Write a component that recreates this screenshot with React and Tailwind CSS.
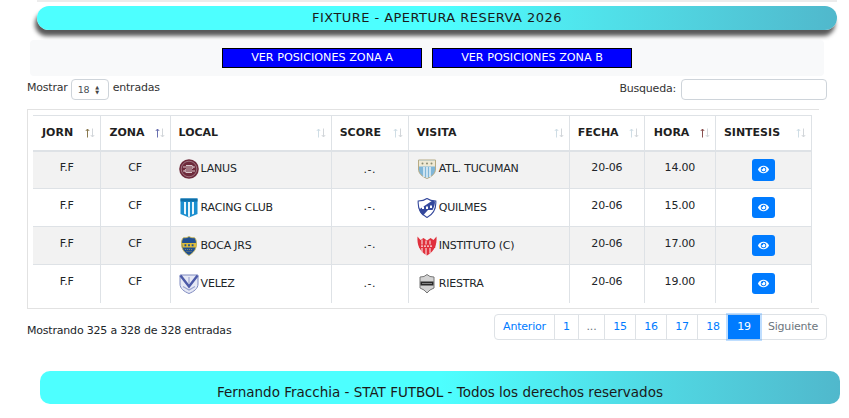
import { FaEye } from 'react-icons/fa';

const FONT = "[font-family:'DejaVu_Sans',Verdana,sans-serif]";

const Lanus = () => (
  <svg width="20" height="20" viewBox="0 0 20 20">
    <circle cx="10" cy="10" r="9.800" fill="#6e2b3c" />
    <circle cx="10" cy="10" r="7.800" fill="none" stroke="#a98590" strokeWidth="0.800" />
    <path d="M4 8h12M4 12h12M7 6.500h6a2 2 0 0 1 0 3.500H7a2 2 0 0 0 0 3.500h6" fill="none" stroke="#d8c6ca" strokeWidth="1" />
  </svg>
);

const Racing = () => (
  <svg width="20" height="20" viewBox="0 0 20 20">
    <path d="M1.500 0.500h17v15.500l-8.500 3.500-8.500-3.500z" fill="#1b8fd0" />
    <path d="M1.500 0.500h17v3h-17z" fill="#0f6ea8" />
    <path d="M5 4h2v12.500l-2-.8zM9 4h2v14.500l-1 .4-1-.4zM13 4h2v11.700l-2 .8z" fill="#e9f6fc" />
  </svg>
);

const Boca = () => (
  <svg width="20" height="20" viewBox="0 0 20 20">
    <path d="M10 0.500c1.500 1 3 1.400 5.500 1.200 1.300 1 2 3 2 6.300 0 5-3 9-7.500 11.500C5.500 17 2.500 13 2.500 8c0-3.300.7-5.300 2-6.300 2.500.2 4-.2 5.500-1.200z" fill="#1f4f92" stroke="#c8b552" strokeWidth="0.900" />
    <path d="M3 7h14v4.500H3.600z" fill="#dcbc3a" />
    <path d="M5.500 8.200h1.800v2H5.500zM9.100 8.200h1.800v2H9.100zM12.700 8.200h1.800v2h-1.800z" fill="#1f4f92" />
    <path d="M6 13.500h8M7.500 15.500h5" stroke="#b9a548" strokeWidth="0.700" strokeDasharray="1 1" />
  </svg>
);

const Velez = () => (
  <svg width="20" height="20" viewBox="0 0 20 20">
    <path d="M1 1h18v9c0 4.500-4 7.500-9 9.500-5-2-9-5-9-9.500z" fill="#e6e9f5" stroke="#7f8ac0" strokeWidth="1" />
    <path d="M1.500 1.500L10 12.500 18.500 1.500" fill="none" stroke="#4c5aa8" strokeWidth="2.400" />
    <path d="M4 12.500l6 3.500 6-3.500M10 3v7" fill="none" stroke="#9aa3d0" strokeWidth="1.100" />
  </svg>
);

const Tucuman = () => (
  <svg width="20" height="20" viewBox="0 0 20 20">
    <path d="M1.500 1h17v9c0 4.500-3.500 7.500-8.500 9.500-5-2-8.500-5-8.500-9.500z" fill="#7fb6d8" stroke="#b7ab84" strokeWidth="1" />
    <path d="M2 1.500h16v6H2z" fill="#efe9d4" />
    <path d="M7 8v10M10 8v11M13 8v10" stroke="#edf6fb" strokeWidth="1.400" />
    <circle cx="5.500" cy="4.500" r="1" fill="#8a8c72" />
    <circle cx="10" cy="4.500" r="1" fill="#8a8c72" />
    <circle cx="14.500" cy="4.500" r="1" fill="#8a8c72" />
  </svg>
);

const Quilmes = () => (
  <svg width="20" height="20" viewBox="0 0 20 20">
    <path d="M10 0.500c2 1.500 5 2.500 8.800 2.500 .5 7-2.300 13-8.800 16.500C3.500 16 .7 10 1.200 3 5 3 8 2 10 .5z" fill="#fff" stroke="#34489c" strokeWidth="1.100" />
    <path d="M2 11.500L15.500 2.500 18 3.500c0 3-1 6-2.500 8.500H11l-5 5.500C4 16 3 14 2 11.500z" fill="#34489c" />
    <path d="M5 8.500h2v2.500H5zM9 8.500h2v2.500H9zM13 7.500h2v2.500h-2z" fill="#fff" />
  </svg>
);

const Instituto = () => (
  <svg width="20" height="20" viewBox="0 0 20 20">
    <path d="M0.500 0.500l3 3.500 3-2 3.500 2.500 3.500-2.500 3 2 3-3.500c.5 8-1.500 14.500-9.500 19C2 15 0 8.500.5.500z" fill="#e0303c" />
    <path d="M5 3.500v13M9 4.500v14.500M13 4.500v13" stroke="#f7d5d8" strokeWidth="1.200" />
    <path d="M1.800 8.500h16.400v3.500H2.500z" fill="#e0303c" />
    <path d="M4 10.200h12" stroke="#fbe4e6" strokeWidth="1.300" strokeDasharray="2 1" />
  </svg>
);

const Riestra = () => (
  <svg width="20" height="20" viewBox="0 0 20 20">
    <path d="M10 0.500l3 2 4 .5v11l-4 2-3 3-3-3-4-2V3l4-.5z" fill="#d3d3d3" stroke="#777" strokeWidth="1" />
    <path d="M3.500 7.500h13v4h-13z" fill="#2b2b2b" />
    <path d="M5.500 9.500h9" stroke="#ddd" strokeWidth="1" strokeDasharray="1 1" />
  </svg>
);

const rows = [
  { local: 'LANUS', localLogo: <Lanus />, visita: 'ATL. TUCUMAN', visitaLogo: <Tucuman />, hora: '14.00' },
  { local: 'RACING CLUB', localLogo: <Racing />, visita: 'QUILMES', visitaLogo: <Quilmes />, hora: '15.00' },
  { local: 'BOCA JRS', localLogo: <Boca />, visita: 'INSTITUTO (C)', visitaLogo: <Instituto />, hora: '17.00' },
  { local: 'VELEZ', localLogo: <Velez />, visita: 'RIESTRA', visitaLogo: <Riestra />, hora: '19.00' },
];

const columns = [
  { label: 'JORN', width: 'w-[67px]', up: '#8a7a50', shift: true },
  { label: 'ZONA', width: 'w-[70px]', up: '#6a70b0', shift: true },
  { label: 'LOCAL', width: 'w-[161px]' },
  { label: 'SCORE', width: 'w-[77px]' },
  { label: 'VISITA', width: 'w-[161px]' },
  { label: 'FECHA', width: 'w-[75px]' },
  { label: 'HORA', width: 'w-[71px]', up: '#8a5050', shift: true },
  { label: 'SINTESIS', width: 'w-[96px]' },
];

const pages = [
  { label: 'Anterior', width: 'w-[59px]' },
  { label: '1', width: 'w-[24px]' },
  { label: '...', width: 'w-[26px]', muted: true },
  { label: '15', width: 'w-[31px]' },
  { label: '16', width: 'w-[31px]' },
  { label: '17', width: 'w-[31px]' },
  { label: '18', width: 'w-[31px]' },
  { label: '19', width: 'w-[32px]', current: true },
  { label: 'Siguiente', width: 'w-[66px]', muted: true },
];

function SortArrows({ up = '#cfdde5' }) {
  return (
    <svg width="10" height="10" viewBox="0 0 10 10" className="shrink-0">
      <path d="M2.500 9.500V1M0.800 3L2.500 1 4.200 3" fill="none" stroke={up} strokeWidth="1" />
      <path d="M7.500 0.500V9M5.800 7L7.500 9 9.200 7" fill="none" stroke="#d2d6da" strokeWidth="1" />
    </svg>
  );
}

function TeamCell({ logo, name, first }) {
  return (
    <td className="border-l border-[#dee2e6] px-2 align-middle">
      <div className={`flex items-center gap-[2px] ${first ? 'pb-px' : 'pt-px'}`}>
        <span className="flex w-5 shrink-0 justify-center">{logo}</span>
        <span>{name}</span>
      </div>
    </td>
  );
}

export default function App() {
  return (
    <div className={`${FONT} h-[418px] w-[849px] overflow-hidden bg-white text-[11px] tracking-[-0.2px] text-[#212529]`}>
      <div className="mx-[37px] h-[2px] w-[800px] bg-[#ececec]" />

      <h1 className="ml-[37px] mt-1 flex h-6 w-[800px] items-center justify-center rounded-xl bg-gradient-to-r from-[#4dffff] from-50% to-[#50b8cc] text-[13px] font-normal tracking-[0.45px] text-[#1a1a1a] shadow-[-2px_6px_4px_rgba(0,0,0,0.65)]">
        FIXTURE - APERTURA RESERVA 2026
      </h1>

      <div className="ml-[30px] mt-[10px] flex h-9 w-[794px] items-center justify-center gap-[10px] rounded bg-[#f8f9fa]">
        <button className="h-5 w-[200px] border border-black bg-[#0000ff] pt-px text-[11.200px] tracking-normal text-white">VER POSICIONES ZONA A</button>
        <button className="h-5 w-[200px] border border-black bg-[#0000ff] pt-px text-[11.200px] tracking-normal text-white">VER POSICIONES ZONA B</button>
      </div>

      <div className="ml-[27px] mt-[3px] flex h-[21px] w-[800px] items-start justify-between">
        <div className="flex items-start gap-[3px] leading-[18px] text-[#333]">
          <span>Mostrar</span>
          <span className="flex h-[21px] w-[38px] items-center gap-[6px] rounded border border-[#ced4da] pl-[6px] text-[9.500px] text-[#495057]">
            18
            <span className="flex flex-col text-[5px] leading-[5px] text-[#444]"><span>▲</span><span>▼</span></span>
          </span>
          <span className="ml-px">entradas</span>
        </div>
        <div className="flex items-center gap-[5px] text-[#333]">
          <span>Busqueda:</span>
          <input className="h-[21px] w-[146px] rounded border border-[#ced4da] bg-white" />
        </div>
      </div>

      <div className="ml-[27px] mt-[9px] h-[200px] w-[792px] border border-r-0 border-[#e2e2e2] pl-[5px] pt-[5px]">
        <table className="w-[779px] table-fixed border-collapse">
          <thead>
            <tr className="h-[35px] border-t border-b-[2px] border-[#dee2e6]">
              {columns.map((col, i) => (
                <th key={col.label} className={`${col.width} ${i > 0 ? 'border-l' : ''} ${i === columns.length - 1 ? 'border-r' : ''} border-[#dee2e6] pl-2 pr-[5px] text-left text-[11px] font-bold tracking-normal text-[#1f1f1f]`}>
                  <div className="flex items-center justify-between">
                    <span className={col.shift ? 'ml-px' : ''}>{col.label}</span>
                    <SortArrows up={col.up} />
                  </div>
                </th>
              ))}
            </tr>
          </thead>
          <tbody>
            {rows.map((row, i) => {
              const pad = i === 0 ? 'pt-2' : 'pt-[9px]';
              const textCell = `border-l border-[#dee2e6] text-center align-top ${pad}`;
              return (
                <tr key={row.local} className={`h-[38px] ${i % 2 === 0 ? 'bg-[#f2f2f2]' : 'bg-white'} ${i < rows.length - 1 ? 'border-b border-[#dee2e6]' : ''}`}>
                  <td className={`${pad} pl-px text-center align-top`}>F.F</td>
                  <td className={textCell}>CF</td>
                  <TeamCell logo={row.localLogo} name={row.local} first={i === 0} />
                  <td className="border-l border-[#dee2e6] text-center align-middle tracking-[0.5px]">.-.</td>
                  <TeamCell logo={row.visitaLogo} name={row.visita} first={i === 0} />
                  <td className={textCell}>20-06</td>
                  <td className={textCell}>{row.hora}</td>
                  <td className="border-x border-[#dee2e6] text-center align-middle">
                    <span className={`mx-auto flex ${i === 0 ? 'h-[22px]' : 'h-[21px]'} w-[23px] items-center justify-center rounded-[3px] bg-[#007bff] text-white`}>
                      <FaEye size={11} />
                    </span>
                  </td>
                </tr>
              );
            })}
          </tbody>
        </table>
      </div>

      <div className="ml-[27px] mt-[5px] flex w-[800px] items-start justify-between">
        <span className="pt-[9px] text-[#212529]">Mostrando 325 a 328 de 328 entradas</span>
        <div className="flex h-[26px] rounded border border-[#dee2e6] text-[11px]">
          {pages.map((p, i) => (
            <span
              key={p.label}
              className={`flex items-center justify-center pt-px ${p.width} ${i > 0 && !p.current && !pages[i - 1].current ? 'border-l border-[#dee2e6]' : ''} ${p.current ? 'bg-[#007bff] text-white shadow-[0_0_0_2px_rgba(0,123,255,0.25)]' : p.muted ? 'text-[#6c757d]' : 'text-[#007bff]'}`}
            >
              {p.label}
            </span>
          ))}
        </div>
      </div>

      <footer className="ml-10 mt-[31px] flex h-[33px] w-[800px] items-end justify-center rounded-[10px] bg-gradient-to-r from-[#4dffff] from-50% to-[#50b8cc] pb-[2px] text-[13.500px] tracking-normal text-[#1a1a1a]">
        Fernando Fracchia - STAT FUTBOL - Todos los derechos reservados
      </footer>
    </div>
  );
}
